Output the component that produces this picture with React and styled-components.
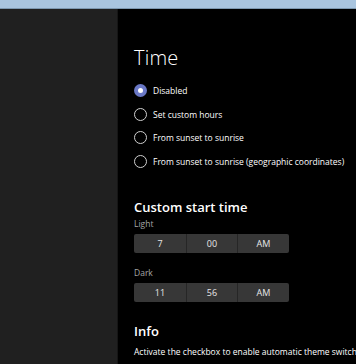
import React from 'react'
import styled, { createGlobalStyle } from 'styled-components'

const Global = createGlobalStyle`
  html, body {
    margin: 0;
    padding: 0;
    background: #000;
  }
  body {
    font-family: "Segoe UI", "Open Sans", "Noto Sans", sans-serif;
    overflow: hidden;
  }
`

const Window = styled.div`
  width: 356px;
  height: 364px;
  display: flex;
  flex-direction: column;
  overflow: hidden;
`

const TitleStrip = styled.div`
  height: 8px;
  background: #a9c5df;
  border-bottom: 1px solid #7d98b0;
  flex-shrink: 0;
`

const Body = styled.div`
  flex: 1;
  display: flex;
  min-height: 0;
`

const Sidebar = styled.div`
  width: 117px;
  background: #202020;
  border-right: 1px solid #161616;
  flex-shrink: 0;
`

const Main = styled.div`
  flex: 1;
  background: #000;
  color: #fff;
  padding: 36px 0 0 16px;
  white-space: nowrap;
  overflow: hidden;
`

const PageTitle = styled.h1`
  margin: 0;
  font-size: 20px;
  font-weight: 300;
  line-height: 26px;
  letter-spacing: 0.2px;
`

const RadioList = styled.div`
  margin-top: 13px;
  display: flex;
  flex-direction: column;
  gap: 10px;
`

const RadioRow = styled.label`
  display: flex;
  align-items: center;
  gap: 6px;
  height: 13.5px;
  font-size: 8.5px;
  color: #fff;
`

const RadioDot = styled.span`
  width: 13px;
  height: 13px;
  box-sizing: border-box;
  border-radius: 50%;
  border: ${p => (p.$checked ? 'none' : '1px solid #d0d0d0')};
  background: ${p => (p.$checked ? '#6a78c6' : 'transparent')};
  display: flex;
  align-items: center;
  justify-content: center;
  &::after {
    content: '';
    display: ${p => (p.$checked ? 'block' : 'none')};
    width: 5px;
    height: 5px;
    border-radius: 50%;
    background: #fff;
  }
`

const SectionTitle = styled.h2`
  margin: ${p => p.$top}px 0 0;
  font-size: 13px;
  font-weight: 600;
  line-height: 16px;
`

const FieldLabel = styled.div`
  margin-top: ${p => p.$top}px;
  font-size: 8.5px;
  color: #a6a6a6;
  line-height: 11px;
`

const TimePicker = styled.div`
  margin-top: 5px;
  width: 155px;
  height: 19px;
  display: grid;
  grid-template-columns: 52px 51px 52px;
  background: #373737;
  border-radius: 2px;
  overflow: hidden;
`

const TimeCell = styled.div`
  display: flex;
  align-items: center;
  justify-content: center;
  font-size: 9px;
  color: #e8e8e8;
  & + & {
    border-left: 1px solid #262626;
  }
`

const Description = styled.p`
  margin: 7px 0 0;
  font-size: 8.5px;
  color: #fff;
`

const options = [
  'Disabled',
  'Set custom hours',
  'From sunset to sunrise',
  'From sunset to sunrise (geographic coordinates)',
]

function Picker({ values }) {
  return (
    <TimePicker>
      {values.map((v, i) => (
        <TimeCell key={i}>{v}</TimeCell>
      ))}
    </TimePicker>
  )
}

export default function App() {
  return (
    <Window>
      <Global />
      <TitleStrip />
      <Body>
        <Sidebar />
        <Main>
          <PageTitle>Time</PageTitle>
          <RadioList>
            {options.map((o, i) => (
              <RadioRow key={o}>
                <RadioDot $checked={i === 0} />
                {o}
              </RadioRow>
            ))}
          </RadioList>
          <SectionTitle $top={31}>Custom start time</SectionTitle>
          <FieldLabel $top={3}>Light</FieldLabel>
          <Picker values={['7', '00', 'AM']} />
          <FieldLabel $top={14}>Dark</FieldLabel>
          <Picker values={['11', '56', 'AM']} />
          <SectionTitle $top={21}>Info</SectionTitle>
          <Description>
            Activate the checkbox to enable automatic theme switching
          </Description>
        </Main>
      </Body>
    </Window>
  )
}
